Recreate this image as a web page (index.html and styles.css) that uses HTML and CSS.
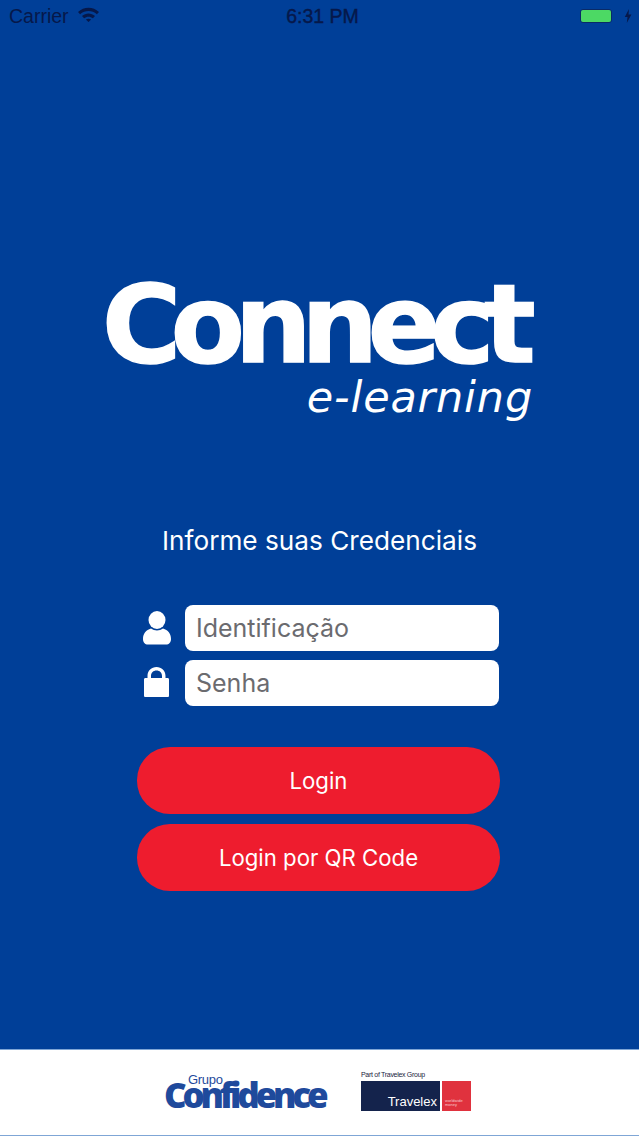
FILE: index.html
```html
<!DOCTYPE html>
<html lang="pt">
<head>
<meta charset="utf-8">
<title>Connect e-learning</title>
<link rel="stylesheet" href="styles.css">
</head>
<body>
<div class="screen">
  <header class="status">
    <div class="status-left">
      <span>Carrier</span>
      <svg class="wifi" viewBox="0 0 20 14"><path d="M0 4.6C5.6-.9 14.4-.9 20 4.6l-2 2.2C13.400 2.700 6.600 2.700 2 6.800z"/><path d="M3.800 8.400c3.600-3.200 8.800-3.200 12.400 0l-2 2.200c-2.500-2-5.900-2-8.400 0z"/><path d="M7.500 11.800c1.500-1 3.500-1 5 0L10 14.200z"/></svg>
    </div>
    <div class="status-time">6:31 PM</div>
    <div class="status-right">
      <span class="battery"><span class="battery-level"></span></span>
      <svg class="bolt" viewBox="0 0 8 14"><path d="M5 0 .8 8h2.700L2.800 14 7.400 5.600H4.500z"/></svg>
    </div>
  </header>
  <main class="main">
    <div class="logo">
      <div class="logo-main">Connect</div>
      <div class="logo-sub">e-learning</div>
    </div>
    <h1 class="title">Informe suas Credenciais</h1>
    <form class="form">
      <div class="field">
        <svg class="field-icon" viewBox="0 0 28 34"><ellipse cx="14" cy="9" rx="8.500" ry="9"/><path d="M0 28c0-5.500 3-9 8-10.500 3.500 2.500 8.500 2.500 12 0 5 1.500 8 5 8 10.500 0 3.500-2 5.500-5 5.500H5c-3 0-5-2-5-5.500z"/></svg>
        <div class="input">Identificação</div>
      </div>
      <div class="field">
        <svg class="field-icon lock" viewBox="0 0 25 30"><path fill-rule="evenodd" d="M3.500 11V9C3.500 3.500 7.500 0 12.500 0s9 3.500 9 9v2H23.500c1 0 1.500.6 1.500 1.500v16c0 1-.5 1.500-1.500 1.500H1.500c-1 0-1.500-.5-1.500-1.500v-16C0 11.600.5 11 1.500 11zm3.500 0h11V9c0-3.300-2.300-5.500-5.500-5.500S7 5.700 7 9z"/></svg>
        <div class="input">Senha</div>
      </div>
      <div class="actions">
        <button type="button" class="btn">Login</button>
        <button type="button" class="btn">Login por QR Code</button>
      </div>
    </form>
  </main>
  <footer class="footer">
    <div class="confidence">
      <div class="conf-grupo">Grupo</div>
      <div class="conf-name">Confidence</div>
    </div>
    <div class="travelex">
      <div class="tx-part">Part of Travelex Group</div>
      <div class="tx-logo">
        <div class="tx-navy">Travelex</div>
        <div class="tx-red">worldwide<br>money</div>
      </div>
    </div>
  </footer>
</div>
</body>
</html>
```

FILE: styles.css
```css
* { box-sizing: border-box; }
html, body { margin: 0; padding: 0; }
body { font-family: "Inter", "Liberation Sans", sans-serif; background: #003f98; }
.screen { width: 639px; height: 1136px; display: flex; flex-direction: column; background: #003f98; overflow: hidden; }

.status { height: 32px; flex: none; display: grid; grid-template-columns: 1fr auto 1fr; align-items: center; padding: 0 7px 0 9px; color: #06184a; font-family: "Liberation Sans", sans-serif; font-size: 19.500px; }
.status-left { display: flex; align-items: center; gap: 9px; }
.wifi { width: 21px; height: 15px; fill: #06184a; margin-top: -3px; }
.status-time { position: relative; left: 2px; -webkit-text-stroke: .4px #06184a; }
.status-right { display: flex; justify-content: flex-end; align-items: center; gap: 12px; }
.battery { width: 32px; height: 14px; padding: 0; border: 1px solid #0a2a66; border-radius: 3px; display: block; margin-top: -1px; }
.battery-level { display: block; height: 100%; background: #4cd964; border-radius: 2px; }
.bolt { width: 8px; height: 14px; fill: #06184a; }

.main { flex: 1; display: flex; flex-direction: column; align-items: center; padding-top: 249px; }
.logo { width: 428px; display: flex; flex-direction: column; align-items: flex-end; color: #fff; margin-right: 7px; }
.logo-main { font-family: "DejaVu Sans", sans-serif; font-weight: 700; font-size: 108px; line-height: 88px; letter-spacing: -10.400px; width: 100%; white-space: nowrap; -webkit-text-stroke: 1.500px #fff; }
.logo-sub { font-family: "DejaVu Sans", sans-serif; font-style: italic; font-size: 43px; line-height: 46px; letter-spacing: .8px; margin-top: 5px; margin-right: -3px; }
.title { margin: 105px 0 0; font-size: 26.200px; font-weight: 400; line-height: 32px; color: #fff; }

.form { width: 363px; margin: 48px 2px 0 0; display: flex; flex-direction: column; gap: 9px; }
.field { display: flex; align-items: center; gap: 14px; padding: 0 1px 0 6px; }
.field-icon { width: 28px; height: 34px; fill: #fff; flex: none; }
.lock { width: 25px; height: 30px; margin: 0 2px 3px 1px; }
.input { flex: 1; height: 46px; background: #fff; border-radius: 8px; color: #6b6b6f; font-size: 25px; line-height: 46px; padding-left: 11px; }
.actions { display: flex; flex-direction: column; gap: 10px; margin-top: 32px; }
.btn { height: 67px; border: 0; border-radius: 33px; background: #ee1c2e; color: #fff; font-family: "Inter", sans-serif; font-size: 22.200px; padding: 0; }

.footer { flex: none; height: 87px; background: #fff; border-top: 1px solid #7fa6d6; border-bottom: 1px solid #7fa6d6; display: flex; justify-content: center; align-items: center; gap: 33px; padding-right: 2px; }
.confidence { width: 162px; color: #1f4a9c; display: flex; flex-direction: column; }
.conf-grupo { padding-left: 22px; font-family: "Liberation Sans", sans-serif; font-size: 13px; line-height: 10px; letter-spacing: -.3px; margin-top: -4px; }
.conf-name { font-family: "Open Sans", sans-serif; font-weight: 800; font-size: 35px; line-height: 24px; letter-spacing: -4.200px; white-space: nowrap; margin: -2px 0 0 -2px; }
.travelex { width: 110px; display: flex; flex-direction: column; gap: 2px; margin-top: -5px; }
.tx-part { font-family: "Liberation Sans", sans-serif; font-size: 7px; letter-spacing: -.3px; color: #1a2340; line-height: 9px; white-space: nowrap; }
.tx-logo { display: flex; height: 30px; gap: 2px; }
.tx-navy { flex: 1; background: #14234c; color: #fff; font-family: "Liberation Sans", sans-serif; font-size: 13px; display: flex; align-items: flex-end; justify-content: flex-end; padding: 0 3px 2px 0; }
.tx-red { width: 29px; background: #e0323e; color: #f7c9cc; font-family: "Liberation Sans", sans-serif; font-size: 4px; line-height: 4px; padding: 18px 0 0 3px; }
```
